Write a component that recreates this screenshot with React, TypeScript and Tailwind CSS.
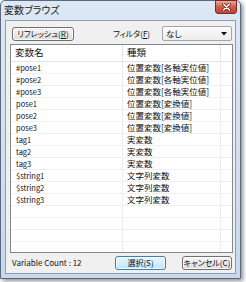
import React from "react"

const rows = [
    { name: "#pose1", type: "位置変数[各軸実位値]" },
    { name: "#pose2", type: "位置変数[各軸実位値]" },
    { name: "#pose3", type: "位置変数[各軸実位値]" },
    { name: "pose1", type: "位置変数[変換値]" },
    { name: "pose2", type: "位置変数[変換値]" },
    { name: "pose3", type: "位置変数[変換値]" },
    { name: "tag1", type: "実変数" },
    { name: "tag2", type: "実変数" },
    { name: "tag3", type: "実変数" },
    { name: "$string1", type: "文字列変数" },
    { name: "$string2", type: "文字列変数" },
    { name: "$string3", type: "文字列変数" },
    { name: "", type: "" },
    { name: "", type: "" },
    { name: "", type: "" },
    { name: "", type: "" },
]

function Button({ children, active, className }: { children: React.ReactNode; active?: boolean; className?: string }) {
    return (
        <div
            className={
                "flex items-center justify-center whitespace-nowrap rounded-[3px] border text-[8px] leading-none " +
                (active
                    ? "border-[#3c7fb1] bg-gradient-to-b from-[#eaf6fd] to-[#bee6fd] shadow-[inset_0_0_0_1px_rgba(255,255,255,0.7)] "
                    : "border-[#707070] bg-gradient-to-b from-[#f6f6f6] to-[#dcdcdc] shadow-[inset_0_0_0_1px_rgba(255,255,255,0.8)] ") +
                (className ?? "")
            }
        >
            {children}
        </div>
    )
}

export default function App() {
    return (
        <div className="w-[246px] h-[282px] bg-white font-['Noto_Sans_CJK_JP','Liberation_Sans',sans-serif] [font-feature-settings:'palt'] text-[#111]">
            <div className="w-[241px] h-[279px] flex flex-col rounded-t-[5px] border border-[#5a6a7e] bg-gradient-to-b from-[#dde8f5] to-[#c8d8eb] shadow-[2px_2px_4px_rgba(0,0,0,0.45)]">
                {/* title bar */}
                <div className="h-[19px] flex items-start justify-between pl-[3px] pr-[3px]">
                    <span className="mt-[2px] text-[10px] leading-[14px] text-[#222]">変数ブラウズ</span>
                    <div className="w-[22px] h-[14px] -mt-px flex items-center justify-center rounded-b-[3px] border border-[#7a2a22] bg-gradient-to-b from-[#e9a99f] via-[#d0584a] to-[#c2452f]">
                        <svg width="9" height="8" viewBox="0 0 9 8">
                            <path d="M1.5 1 L7.5 7 M7.5 1 L1.5 7" stroke="#5a1d16" strokeWidth="3" strokeLinecap="round" />
                            <path d="M1.5 1 L7.5 7 M7.5 1 L1.5 7" stroke="#fff" strokeWidth="1.6" strokeLinecap="round" />
                        </svg>
                    </div>
                </div>

                {/* client area */}
                <div className="mx-[4px] mb-[4px] flex-1 flex flex-col border border-[#8d9cb0] bg-[#f0f0f0]">
                    <div className="mt-[5px] h-[15px] flex items-center">
                        <Button className="ml-[6px] w-[62px] h-[14px]">
                            リフレッシュ(<span className="underline">R</span>)
                        </Button>
                        <span className="ml-[39px] w-[36px] whitespace-nowrap text-[8px] leading-none">
                            フィルタ(<span className="underline">F</span>)
                        </span>
                        <div className="ml-[13px] w-[70px] h-[15px] flex items-center justify-between rounded-[2px] border border-[#a5a5a5] bg-gradient-to-b from-[#fbfbfb] to-[#ececec] pl-[3px] pr-[4px]">
                            <span className="text-[8.5px] leading-none">なし</span>
                            <svg width="6" height="4" viewBox="0 0 6 4">
                                <path d="M0 0 H6 L3 3.5 Z" fill="#111" />
                            </svg>
                        </div>
                    </div>

                    {/* list */}
                    <div className="mt-[3px] ml-[4px] w-[223px] h-[209px] border border-[#828790] bg-white overflow-hidden">
                        <div className="h-[17px] flex border-b border-[#e5e5e5]">
                            <div className="w-[112px] border-r border-[#e5e5e5] pl-[4px] flex items-center text-[9.5px] leading-none">変数名</div>
                            <div className="w-[98px] border-r border-[#e5e5e5] pl-[4px] flex items-center text-[9.5px] leading-none">種類</div>
                            <div className="flex-1" />
                        </div>
                        {rows.map((r, i) => (
                            <div key={i} className="h-[12px] flex border-b border-[#f0f0f0] leading-none whitespace-nowrap">
                                <div className="w-[112px] border-r border-[#ececec] pl-[5px] flex items-center text-[7.5px]">{r.name}</div>
                                <div className="w-[98px] border-r border-[#ececec] pl-[4px] flex items-center text-[8.5px]">{r.type}</div>
                                <div className="flex-1" />
                            </div>
                        ))}
                    </div>

                    <div className="mt-[3px] h-[14px] flex items-center">
                        <span className="ml-[6px] w-[64px] whitespace-nowrap text-[8px] leading-none">Variable Count : 12</span>
                        <Button active className="ml-[39px] w-[51px] h-[14px]">
                            選択(S)
                        </Button>
                        <Button className="ml-[16px] w-[50px] h-[14px]">
                            キャンセル(C)
                        </Button>
                    </div>
                </div>
            </div>
        </div>
    )
}
